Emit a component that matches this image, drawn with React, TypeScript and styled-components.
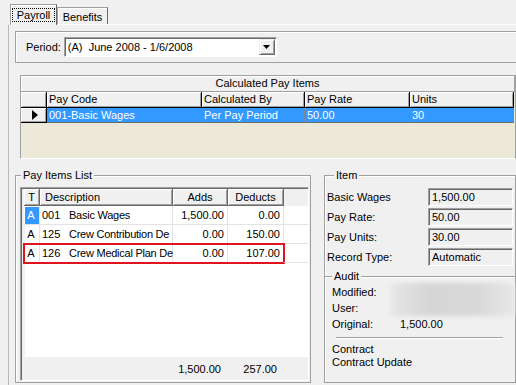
import React from "react";
import styled, { createGlobalStyle, css } from "styled-components";

const GlobalStyle = createGlobalStyle`
  html, body { margin: 0; padding: 0; background: #f0f0f0; }
  body {
    font-family: "Liberation Sans", Arial, sans-serif;
    font-size: 11px;
    color: #000;
  }
  * { box-sizing: border-box; }
`;

const Screen = styled.div`
  width: 516px;
  height: 385px;
  overflow: hidden;
  padding: 4px 0 0 8px;
  display: flex;
  flex-direction: column;
`;

const TabStrip = styled.div`
  display: flex;
  align-items: flex-end;
  height: 20px;
  padding-left: 2px;
  position: relative;
  z-index: 1;
`;

const Tab = styled.div<{ $active?: boolean }>`
  display: flex;
  align-items: center;
  justify-content: center;
  background: #f0f0f0;
  border: 1px solid #a0a0a0;
  border-bottom: none;
  border-right-color: #696969;
  box-shadow: inset 1px 1px #fff;
  ${(p) =>
    p.$active
      ? css`
          width: 47px;
          height: 21px;
          margin-bottom: -1px;
          padding-bottom: 1px;
        `
      : css`
          width: 51px;
          height: 17px;
          padding-top: 1px;
        `}
`;

const FocusRing = styled.span`
  width: 43px;
  text-align: center;
  border: 1px dotted #000;
  line-height: 12px;
`;

const TabPage = styled.div`
  flex: 1;
  border-top: 1px solid #fff;
  border-left: 1px solid #b9b9b9;
  padding: 6px 0 0 6px;
`;

const GroupBox = styled.div`
  position: relative;
  border: 1px solid #a0a0a0;
  box-shadow: inset 1px 1px #fff;
`;

const Legend = styled.span<{ $left: number }>`
  position: absolute;
  top: -7px;
  left: ${(p) => p.$left}px;
  padding: 0 2px;
  background: #f0f0f0;
  line-height: 13px;
`;

const PeriodBox = styled(GroupBox)`
  width: 540px;
  height: 32px;
  display: flex;
  align-items: center;
  gap: 3px;
  padding-left: 10px;
`;

const Combo = styled.div`
  width: 213px;
  height: 20px;
  display: flex;
  align-items: center;
  background: #fff;
  border: 1px solid;
  border-color: #a0a0a0 #fff #fff #a0a0a0;
  box-shadow: inset 1px 1px #696969;
  padding: 1px 1px 1px 3px;
  white-space: pre;
`;

const ComboButton = styled.div`
  margin-left: auto;
  width: 16px;
  height: 16px;
  display: flex;
  align-items: center;
  justify-content: center;
  background: #f0f0f0;
  border: 1px solid;
  border-color: #f0f0f0 #696969 #696969 #f0f0f0;
  box-shadow: inset 1px 1px #fff, inset -1px -1px #a0a0a0;
`;

const CalcGrid = styled.div`
  margin: 12px 0 0 5px;
  width: 496px;
  height: 84px;
  display: flex;
  flex-direction: column;
  background: #ece9d8;
  border: 1px solid #a0a0a0;
  border-bottom-color: #fff;
`;

const TitleRow = styled.div`
  height: 16px;
  line-height: 15px;
  text-align: center;
  background: #f0f0f0;
  border-right: 1px solid #a0a0a0;
  border-bottom: 1px solid #a0a0a0;
  box-shadow: inset 1px 1px #fff;
`;

const GridRow = styled.div<{ $h: number }>`
  display: flex;
  height: ${(p) => p.$h}px;
`;

const HeadCell = styled.div<{ $w: number }>`
  width: ${(p) => p.$w}px;
  padding-left: 2px;
  line-height: 15px;
  white-space: nowrap;
  background: #f0f0f0;
  border-right: 1px solid #000;
  border-bottom: 1px solid #000;
  box-shadow: inset 1px 1px #fff, inset -1px -1px #a0a0a0;
`;

const RowHead = styled(HeadCell)`
  display: flex;
  align-items: center;
  justify-content: center;
  padding: 0 0 0 2px;
`;

const DataCell = styled.div<{ $w: number }>`
  width: ${(p) => p.$w}px;
  padding-left: 2px;
  line-height: 14px;
  white-space: nowrap;
  color: #fff;
  background: #3399ff;
  border-right: 1px solid #7a8a9a;
  border-bottom: 1px solid #6d6d6d;
`;

const BottomRow = styled.div`
  display: flex;
  gap: 13px;
  margin-top: 16px;
  height: 208px;
`;

const PayItemsBox = styled(GroupBox)`
  width: 296px;
  display: flex;
  flex-direction: column;
  padding: 11px 1px 1px 4px;
`;

const ListFrame = styled.div`
  flex: 1;
  display: flex;
  flex-direction: column;
  background: #f0f0f0;
  border: 1px solid;
  border-color: #a0a0a0 #fff #fff #a0a0a0;
  box-shadow: inset 1px 1px #696969;
  padding: 1px 0 0 3px;
`;

const ListHeadCell = styled.div<{ $w: number; $align?: string }>`
  width: ${(p) => p.$w}px;
  text-align: ${(p) => p.$align || "center"};
  padding-left: ${(p) => (p.$align === "left" ? 5 : 0)}px;
  line-height: 16px;
  background: #f0f0f0;
  border-right: 1px solid #696969;
  border-bottom: 1px solid #696969;
  box-shadow: inset 1px 1px #fff, inset -1px -1px #a0a0a0;
`;

const ListBody = styled.div`
  flex: 1;
  background: #fff;
  margin-left: 1px;
`;

const ListRow = styled.div`
  display: flex;
  height: 19px;
  margin-left: -1px;
`;

const ListCells = styled.div<{ $marked?: boolean }>`
  display: flex;
  ${(p) =>
    p.$marked &&
    css`
      outline: 2px solid #e0141e;
      outline-offset: -1px;
    `}
`;

const ListCell = styled.div<{ $w: number; $align?: string; $hl?: boolean }>`
  width: ${(p) => p.$w}px;
  text-align: ${(p) => p.$align || "left"};
  padding: 0 3px 0 2px;
  line-height: 18px;
  white-space: nowrap;
  border-right: 1px solid #e3e3e3;
  border-bottom: 1px solid #e3e3e3;
  ${(p) =>
    p.$hl &&
    css`
      background: #3399ff;
      color: #fff;
      box-shadow: inset 1px 1px #fff;
    `}
`;

const DescText = styled.span`
  letter-spacing: -0.25px;
`;

const RowFiller = styled.div`
  flex: 1;
  border-bottom: 1px solid #e3e3e3;
`;

const Code = styled.span`
  display: inline-block;
  width: 27px;
`;

const ListFooter = styled.div`
  display: flex;
  height: 23px;
  align-items: center;
`;

const FooterCell = styled.div<{ $w: number }>`
  width: ${(p) => p.$w}px;
  text-align: right;
  padding-right: 7px;
`;

const RightCol = styled.div`
  width: 192px;
  display: flex;
  flex-direction: column;
`;

const ItemBox = styled(GroupBox)`
  height: 101px;
  border-bottom: none;
  padding: 12px 2px 0 2px;
`;

const FieldRow = styled.div`
  display: flex;
  align-items: center;
  height: 18px;
  margin-bottom: 2px;
`;

const FieldLabel = styled.div`
  width: 101px;
`;

const Field = styled.div`
  width: 85px;
  height: 18px;
  line-height: 16px;
  padding-left: 3px;
  background: #f0f0f0;
  border: 1px solid;
  border-color: #a0a0a0 #fff #fff #a0a0a0;
  box-shadow: inset 1px 1px #696969;
`;

const AuditBox = styled(GroupBox)`
  flex: 1;
  padding: 7px 1px 0 7px;
`;

const AuditGrid = styled.div`
  display: grid;
  grid-template-columns: 59px 1fr;
  grid-auto-rows: 16px;
  align-items: center;
`;

const Redacted = styled.div`
  grid-column: 2;
  grid-row: 1 / span 2;
  align-self: stretch;
  margin: -1px -1px 0 0;
  background: linear-gradient(90deg, #e6e6e6, #d6d6d6 30%, #d8d8d8 70%, #e8e8e8);
  filter: blur(2px);
`;

const AuditValue = styled.div`
  padding-left: 9px;
`;

const Separator = styled.div`
  margin: 5px 11px 0 4px;
  height: 2px;
  border-top: 1px solid #a0a0a0;
  border-bottom: 1px solid #fff;
`;

const Notes = styled.div`
  margin-top: 4px;
  line-height: 13px;
`;

const calcCols = [
  { label: "Pay Code", w: 155, v: "001-Basic Wages" },
  { label: "Calculated By", w: 103, v: "Per Pay Period" },
  { label: "Pay Rate", w: 105, v: "50.00" },
  { label: "Units", w: 104, v: "30" },
];

// descriptions are cut by the column in the original list
const payItems = [
  { code: "001", name: "Basic Wages", adds: "1,500.00", deducts: "0.00", hl: true },
  { code: "125", name: "Crew Contribution De", adds: "0.00", deducts: "150.00" },
  { code: "126", name: "Crew Medical Plan De", adds: "0.00", deducts: "107.00", marked: true },
];

const itemFields = [
  ["Basic Wages", "1,500.00"],
  ["Pay Rate:", "50.00"],
  ["Pay Units:", "30.00"],
  ["Record Type:", "Automatic"],
];

const W = { t: 16, desc: 133, adds: 55, ded: 56 };

export default function App() {
  return (
    <>
      <GlobalStyle />
      <Screen>
        <TabStrip>
          <Tab $active>
            <FocusRing>Payroll</FocusRing>
          </Tab>
          <Tab>Benefits</Tab>
        </TabStrip>
        <TabPage>
          <PeriodBox>
            <span>Period:</span>
            <Combo>
              <span>{"(A)  June 2008 - 1/6/2008"}</span>
              <ComboButton>
                <svg width="7" height="4" viewBox="0 0 7 4">
                  <polygon points="0,0 7,0 3.5,4" fill="#000" />
                </svg>
              </ComboButton>
            </Combo>
          </PeriodBox>

          <CalcGrid>
            <TitleRow>Calculated Pay Items</TitleRow>
            <GridRow $h={16}>
              <HeadCell $w={26} />
              {calcCols.map((c) => (
                <HeadCell key={c.label} $w={c.w}>
                  {c.label}
                </HeadCell>
              ))}
            </GridRow>
            <GridRow $h={15}>
              <RowHead $w={26}>
                <svg width="6" height="10" viewBox="0 0 6 10">
                  <polygon points="0,0 6,5 0,10" fill="#000" />
                </svg>
              </RowHead>
              {calcCols.map((c) => (
                <DataCell key={c.label} $w={c.w}>
                  {c.v}
                </DataCell>
              ))}
            </GridRow>
          </CalcGrid>

          <BottomRow>
            <PayItemsBox>
              <Legend $left={5}>Pay Items List</Legend>
              <ListFrame>
                <GridRow $h={17}>
                  <ListHeadCell $w={W.t}>T</ListHeadCell>
                  <ListHeadCell $w={W.desc} $align="left">
                    Description
                  </ListHeadCell>
                  <ListHeadCell $w={W.adds}>Adds</ListHeadCell>
                  <ListHeadCell $w={W.ded}>Deducts</ListHeadCell>
                </GridRow>
                <ListBody>
                  {payItems.map((it) => (
                    <ListRow key={it.code}>
                      <ListCells $marked={it.marked}>
                        <ListCell $w={W.t} $align="center" $hl={it.hl}>
                          A
                        </ListCell>
                        <ListCell $w={W.desc}>
                          <Code>{it.code}</Code>
                          <DescText>{it.name}</DescText>
                        </ListCell>
                        <ListCell $w={W.adds} $align="right">
                          {it.adds}
                        </ListCell>
                        <ListCell $w={W.ded} $align="right">
                          {it.deducts}
                        </ListCell>
                      </ListCells>
                      <RowFiller />
                    </ListRow>
                  ))}
                </ListBody>
                <ListFooter>
                  <FooterCell $w={W.t} />
                  <FooterCell $w={W.desc} />
                  <FooterCell $w={W.adds}>1,500.00</FooterCell>
                  <FooterCell $w={W.ded}>257.00</FooterCell>
                </ListFooter>
              </ListFrame>
            </PayItemsBox>

            <RightCol>
              <ItemBox>
                <Legend $left={9}>Item</Legend>
                {itemFields.map(([label, value]) => (
                  <FieldRow key={label}>
                    <FieldLabel>{label}</FieldLabel>
                    <Field>{value}</Field>
                  </FieldRow>
                ))}
              </ItemBox>
              <AuditBox>
                <Legend $left={7}>Audit</Legend>
                <AuditGrid>
                  <span>Modified:</span>
                  <Redacted />
                  <span>User:</span>
                  <span>Original:</span>
                  <AuditValue>1,500.00</AuditValue>
                </AuditGrid>
                <Separator />
                <Notes>
                  Contract
                  <br />
                  Contract Update
                </Notes>
              </AuditBox>
            </RightCol>
          </BottomRow>
        </TabPage>
      </Screen>
    </>
  );
}
